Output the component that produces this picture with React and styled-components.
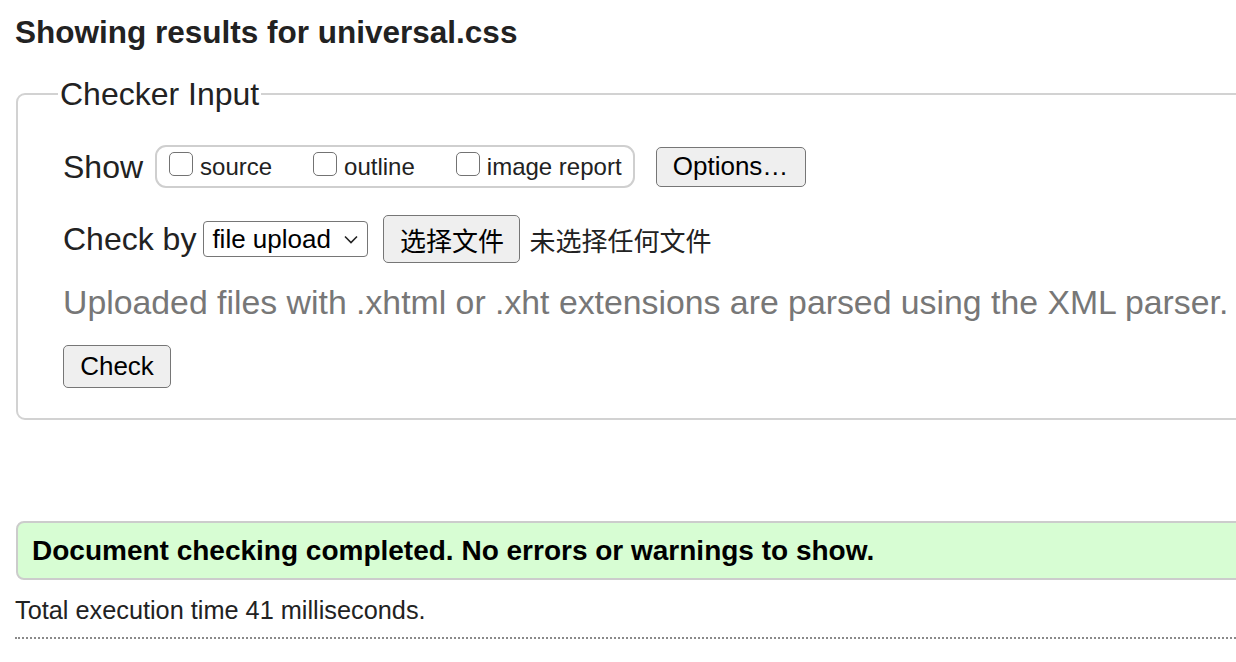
import styled, { createGlobalStyle } from "styled-components";

const GlobalStyle = createGlobalStyle`
  html, body {
    margin: 0;
    padding: 0;
    overflow: hidden;
    background: #fff;
  }
  body {
    font-family: "Liberation Sans", "Noto Sans CJK SC", sans-serif;
    color: #222;
  }
`;

const Page = styled.div`
  width: 1320px;
  padding: 12px 0 0 15px;
`;

const Heading = styled.h2`
  margin: 0;
  font-size: 31.5px;
  line-height: 40px;
  font-weight: 700;
  color: #222;
`;

const Fieldset = styled.fieldset`
  margin: 24px 0 0 1px;
  padding: 0 0 30px 45px;
  border: 2px solid #d2d2d2;
  border-radius: 9px;
  min-inline-size: 0;
`;

const Legend = styled.legend`
  margin-left: -5px;
  padding: 0 2px;
  font-size: 32px;
  line-height: 36px;
  color: #222;
`;

const Row = styled.div`
  display: flex;
  align-items: center;
  margin-top: ${(p) => p.$top}px;
`;

const Label = styled.span`
  font-size: 32px;
  line-height: 40px;
  color: #222;
`;

const Group = styled.div`
  display: flex;
  align-items: baseline;
  height: 39px;
  margin-left: 12px;
  padding: 0 11px 0 12px;
  border: 2px solid #cfcfcf;
  border-radius: 11px;
  box-sizing: content-box;
`;

const Option = styled.label`
  display: flex;
  align-items: baseline;
  margin-right: ${(p) => (p.$last ? 0 : 41)}px;
  font-size: 24px;
  line-height: 39px;
  color: #222;
`;

const Box = styled.input.attrs({ type: "checkbox" })`
  appearance: none;
  width: 24px;
  height: 24px;
  margin: 0 7px 0 0;
  box-sizing: border-box;
  border: 1.5px solid #737373;
  border-radius: 5px;
  background: #fff;
  transform: translateY(1px);
`;

const Button = styled.button`
  display: flex;
  align-items: center;
  justify-content: center;
  box-sizing: border-box;
  height: ${(p) => p.$h}px;
  width: ${(p) => p.$w}px;
  margin-left: ${(p) => p.$left || 0}px;
  padding: 0;
  border: 1.5px solid #767676;
  border-radius: 5px;
  background: #efefef;
  color: #000;
  font-family: "Liberation Sans", "Noto Sans CJK SC", sans-serif;
  font-size: 26px;
`;

const Select = styled.div`
  display: flex;
  align-items: center;
  justify-content: space-between;
  box-sizing: border-box;
  width: 165px;
  height: 36px;
  margin-left: 7px;
  padding: 0 9px 0 8px;
  border: 1.5px solid #767676;
  border-radius: 4px;
  background: #fff;
  color: #000;
  font-size: 26px;
`;

const FileNote = styled.span`
  margin-left: 9px;
  font-size: 26px;
  color: #222;
`;

const Hint = styled.p`
  margin: 19px 0 0;
  font-size: 33.8px;
  line-height: 40px;
  color: #777;
`;

const Result = styled.div`
  margin: 101px 0 0 1px;
  height: 55px;
  display: flex;
  align-items: center;
  padding-left: 14px;
  border: 2px solid #cccccc;
  border-radius: 8px;
  background: #d7fdd3;
  font-size: 28px;
  font-weight: 700;
  color: #000;
`;

const Timing = styled.p`
  margin: 14px 0 0;
  font-size: 25.3px;
  line-height: 32px;
  color: #222;
`;

const Rule = styled.hr`
  margin: 11px 0 0;
  border: 0;
  border-top: 2px dotted #8a8a8a;
`;

const Chevron = () => (
  <svg width="14" height="9" viewBox="0 0 14 9">
    <path d="M1 1.5 L7 7.5 L13 1.5" fill="none" stroke="#222" strokeWidth="1.6" />
  </svg>
);

export default function App() {
  return (
    <>
      <GlobalStyle />
      <Page>
        <Heading>Showing results for universal.css</Heading>
        <Fieldset>
          <Legend>Checker Input</Legend>
          <Row $top={33}>
            <Label>Show</Label>
            <Group>
              <Option>
                <Box />
                source
              </Option>
              <Option>
                <Box />
                outline
              </Option>
              <Option $last>
                <Box />
                image report
              </Option>
            </Group>
            <Button $w={150} $h={40} $left={21}>
              Options…
            </Button>
          </Row>
          <Row $top={27}>
            <Label>Check by</Label>
            <Select>
              <span>file upload</span>
              <Chevron />
            </Select>
            <Button $w={137} $h={48} $left={15}>
              选择文件
            </Button>
            <FileNote>未选择任何文件</FileNote>
          </Row>
          <Hint>Uploaded files with .xhtml or .xht extensions are parsed using the XML parser.</Hint>
          <Row $top={23}>
            <Button $w={108} $h={43}>
              Check
            </Button>
          </Row>
        </Fieldset>
        <Result>Document checking completed. No errors or warnings to show.</Result>
        <Timing>Total execution time 41 milliseconds.</Timing>
        <Rule />
      </Page>
    </>
  );
}
